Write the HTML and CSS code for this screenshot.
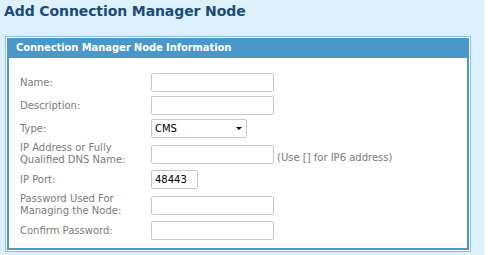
FILE: index.html
```html
<!DOCTYPE html>
<html>
<head>
<meta charset="utf-8">
<link rel="stylesheet" href="styles.css">
</head>
<body>
<div class="page">
  <h1 class="title">Add Connection Manager Node</h1>
  <div class="panel">
    <div class="panel-inner">
      <div class="panel-head">Connection Manager Node Information</div>
      <div class="form">
        <div class="row"><label class="lbl">Name:</label><div class="ctl"><span class="input"></span></div></div>
        <div class="row"><label class="lbl">Description:</label><div class="ctl"><span class="input"></span></div></div>
        <div class="row"><label class="lbl">Type:</label><div class="ctl"><span class="select">CMS<span class="caret"></span></span></div></div>
        <div class="row"><label class="lbl two">IP Address or Fully<br>Qualified DNS Name:</label><div class="ctl"><span class="input"></span><span class="hint">(Use [] for IP6 address)</span></div></div>
        <div class="row"><label class="lbl">IP Port:</label><div class="ctl"><span class="input short">48443</span></div></div>
        <div class="row"><label class="lbl two">Password Used For<br>Managing the Node:</label><div class="ctl"><span class="input"></span></div></div>
        <div class="row"><label class="lbl">Confirm Password:</label><div class="ctl"><span class="input"></span></div></div>
      </div>
    </div>
  </div>
</div>
</body>
</html>
```
FILE: styles.css
```css
html, body { margin: 0; padding: 0; background: #fff; }
body { font-family: "DejaVu Sans", Verdana, sans-serif; }
.page {
  width: 484px;
  height: 255px;
  background: #def0fc;
  padding-top: 1px;
  box-sizing: border-box;
}
.title {
  margin: 0 0 0 4px;
  font-size: 14px;
  line-height: 20px;
  font-weight: bold;
  color: #1b4c78;
  letter-spacing: -0.1px;
}
.panel {
  margin: 15px 0 0 5px;
  width: 466px;
  border: 1px solid #8cc2e6;
  padding: 1px;
  background: #fff;
  box-sizing: border-box;
}
.panel-inner {
  border: 2px solid #4a97c9;
  border-top-width: 0;
  background: #fff;
}
.panel-head {
  background: #4a97c9;
  color: #fff;
  font-weight: bold;
  font-size: 10px;
  height: 20px;
  line-height: 20px;
  padding-left: 7px;
  letter-spacing: -0.1px;
}
.form {
  padding: 15px 0 8px 11px;
  display: flex;
  flex-direction: column;
  gap: 4px;
}
.row {
  display: flex;
  align-items: center;
  min-height: 19px;
}
.lbl {
  width: 131px;
  flex: none;
  font-size: 10px;
  line-height: 12px;
  color: #7a7a7a;
}
.ctl { display: flex; align-items: flex-end; }
.input {
  display: block;
  width: 118px;
  height: 17px;
  border: 1px solid #c9c9c9;
  border-radius: 2px;
  background: #fff;
  font-size: 10px;
  line-height: 17px;
  padding-left: 3px;
  box-sizing: content-box;
  color: #000;
}
.input.short { width: 42px; }
.select {
  display: block;
  position: relative;
  width: 91px;
  height: 17px;
  border: 1px solid #c9c9c9;
  border-radius: 2px;
  font-size: 10px;
  line-height: 17px;
  padding-left: 3px;
  color: #000;
}
.caret {
  position: absolute;
  right: 4px;
  top: 7px;
  width: 0;
  height: 0;
  border-left: 3px solid transparent;
  border-right: 3px solid transparent;
  border-top: 3px solid #000;
}
.hint {
  font-size: 10px;
  color: #7a7a7a;
  margin-left: 3px;
  line-height: 12px;
}
```
